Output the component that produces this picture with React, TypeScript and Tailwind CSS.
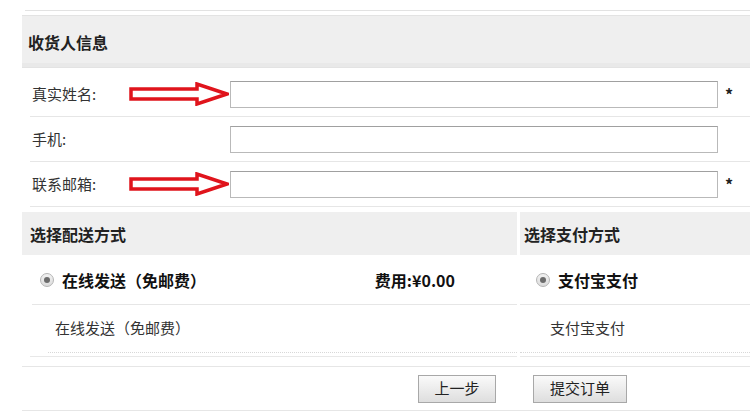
const font = "font-['Noto_Sans_CJK_SC','Noto_Sans',sans-serif]";

function Arrow() {
  return (
    <svg width="100" height="24" viewBox="0 0 100 24" className="shrink-0" aria-hidden>
      <path
        d="M2 7 H68 V2 L98 12 L68 22 V17 H2 Z"
        fill="white"
        stroke="#e0141c"
        strokeWidth="3.5"
        strokeLinejoin="miter"
      />
    </svg>
  );
}

function Radio() {
  return (
    <span className="flex h-[14px] w-[14px] shrink-0 items-center justify-center rounded-full border border-[#b5b5b5] bg-gradient-to-b from-[#f2f2f2] to-[#dcdcdc]">
      <span className="h-[6px] w-[6px] rounded-full bg-[#6c6c6c]" />
    </span>
  );
}

type Field = { label: string; required: boolean; arrow: boolean };

const fields: Field[] = [
  { label: "真实姓名:", required: true, arrow: true },
  { label: "手机:", required: false, arrow: false },
  { label: "联系邮箱:", required: true, arrow: true },
];

function FieldRow({ field }: { field: Field }) {
  return (
    <div className="ml-[8px] flex h-[45px] items-center border-b border-[#e6e6e6] pl-[2px]">
      <span className="w-[97px] text-[15px] text-[#333]">{field.label}</span>
      <div className="w-[101px]">{field.arrow && <Arrow />}</div>
      <input
        className="h-[27px] w-[488px] border border-[#b9b9b9] border-t-[#a0a0a0] bg-white outline-none"
        aria-label={field.label}
      />
      {field.required && <span className="ml-[7px] text-[16px] font-bold text-[#222]">*</span>}
    </div>
  );
}

export default function App() {
  return (
    <div className={`${font} h-[420px] w-[750px] overflow-hidden bg-white`}>
      <div className="ml-[25px] mt-[10px] border-t border-[#e2e2e2]" />

      <div className="ml-[22px] mt-[4px]">
        {/* consignee */}
        <div className="flex h-[53px] items-center border-y border-[#e3e3e3] bg-[#efefef] pl-[6px] shadow-[inset_0_-4px_0_#e9e9e9]">
          <span className="text-[16px] font-bold text-[#222]">收货人信息</span>
        </div>
        <div className="pt-[4px]">
          {fields.map((f) => (
            <FieldRow key={f.label} field={f} />
          ))}
        </div>

        {/* shipping + payment */}
        <div className="mt-[5px] flex">
          <div className="w-[495px]">
            <div className="flex h-[43px] items-center bg-[#efefef] pl-[8px]">
              <span className="text-[16px] font-bold text-[#222]">选择配送方式</span>
            </div>
            <div className="ml-[10px] flex h-[50px] items-center border-b border-[#e6e6e6] pl-[8px]">
              <Radio />
              <span className="ml-[8px] text-[16px] font-bold text-[#111]">在线发送（免邮费）</span>
              <span className="ml-auto mr-[62px] text-[16px] font-bold text-[#111]">费用:¥0.00</span>
            </div>
            <div className="ml-[10px] flex h-[47px] items-center pl-[23px]">
              <span className="text-[15px] text-[#333]">在线发送（免邮费）</span>
            </div>
            <div className="ml-[26px] border-t border-dotted border-[#d8d8d8]" />
            <div className="ml-[8px] mt-[3px] border-t border-[#e8e8e8]" />
          </div>
          <div className="ml-[3px] flex-1">
            <div className="flex h-[43px] items-center bg-[#efefef] pl-[4px]">
              <span className="text-[16px] font-bold text-[#222]">选择支付方式</span>
            </div>
            <div className="flex h-[50px] items-center border-b border-[#e6e6e6] pl-[16px]">
              <Radio />
              <span className="ml-[8px] text-[16px] font-bold text-[#111]">支付宝支付</span>
            </div>
            <div className="flex h-[47px] items-center pl-[30px]">
              <span className="text-[15px] text-[#333]">支付宝支付</span>
            </div>
            <div className="border-t border-dotted border-[#d8d8d8]" />
            <div className="mt-[3px] border-t border-[#e8e8e8]" />
          </div>
        </div>

        {/* actions */}
        <div className="mt-[9px] flex h-[45px] items-center gap-[37px] border-y border-[#e6e6e6] pl-[396px]">
          <button className="h-[28px] w-[78px] border border-[#a8a8a8] bg-gradient-to-b from-[#fafafa] to-[#dedede] text-[15px] text-[#222]">
            上一步
          </button>
          <button className="h-[28px] w-[94px] border border-[#a8a8a8] bg-gradient-to-b from-[#fafafa] to-[#dedede] text-[15px] text-[#222]">
            提交订单
          </button>
        </div>
      </div>
    </div>
  );
}
